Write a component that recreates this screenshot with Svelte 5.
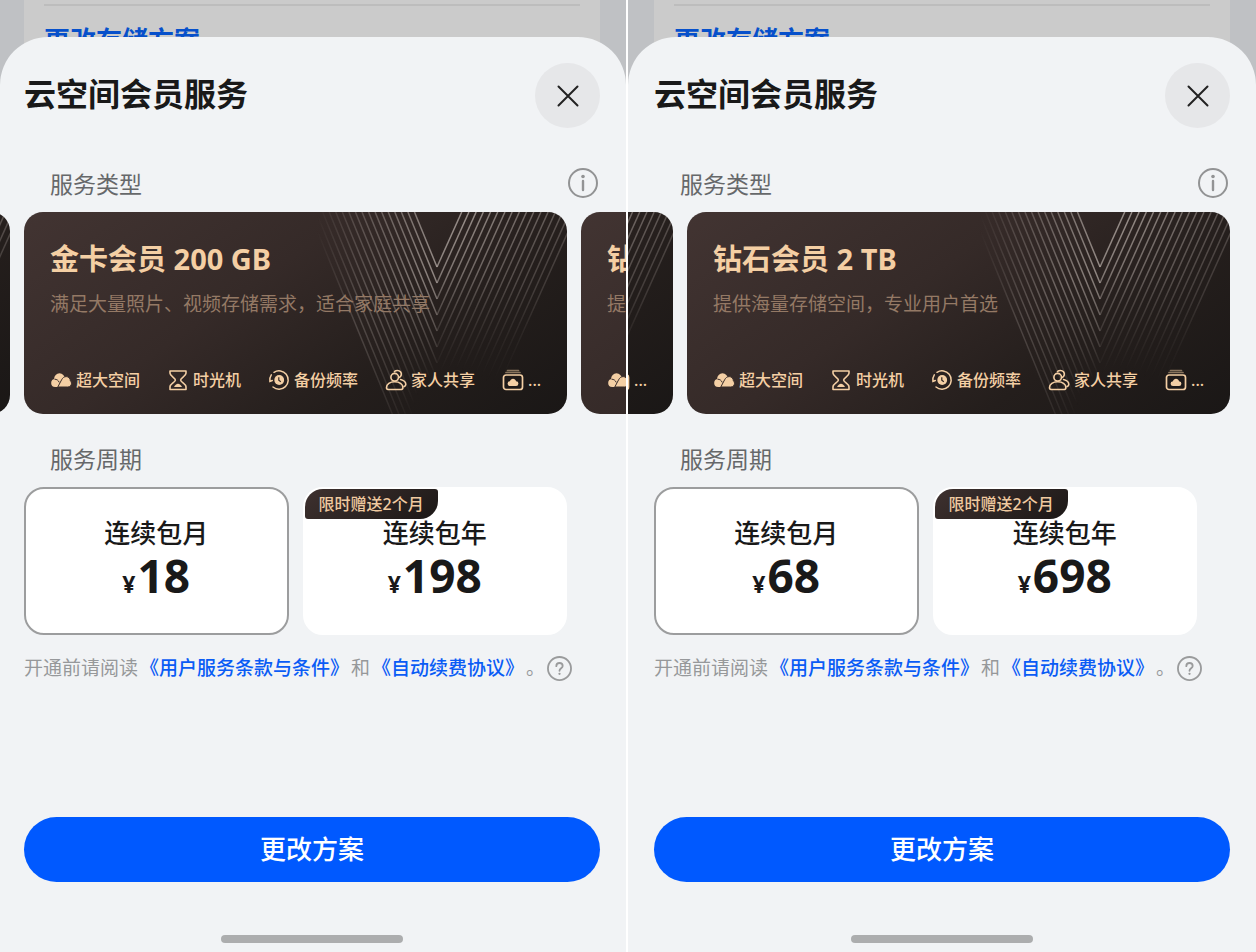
<script lang="ts">
	type Plan = {
		id: string;
		title: string;
		description: string;
	};

	type Period = {
		id: string;
		name: string;
		price: number;
		gift?: string;
	};

	type Pane = {
		id: string;
		align: 'start' | 'end';
		plans: Plan[];
		periods: Period[];
	};

	const basic: Plan = { id: 'basic', title: '', description: '' };
	const gold: Plan = {
		id: 'gold',
		title: '金卡会员 200 GB',
		description: '满足大量照片、视频存储需求，适合家庭共享'
	};
	const diamond: Plan = {
		id: 'diamond',
		title: '钻石会员 2 TB',
		description: '提供海量存储空间，专业用户首选'
	};

	const GIFT = '限时赠送2个月';

	const panes: Pane[] = [
		{
			id: 'left',
			align: 'start',
			plans: [basic, gold, diamond],
			periods: [
				{ id: 'month', name: '连续包月', price: 18 },
				{ id: 'year', name: '连续包年', price: 198, gift: GIFT }
			]
		},
		{
			id: 'right',
			align: 'end',
			plans: [gold, diamond],
			periods: [
				{ id: 'month', name: '连续包月', price: 68 },
				{ id: 'year', name: '连续包年', price: 698, gift: GIFT }
			]
		}
	];

	const benefits = [
		{ icon: 'cloud', label: '超大空间' },
		{ icon: 'hourglass', label: '时光机' },
		{ icon: 'backup', label: '备份频率' },
		{ icon: 'family', label: '家人共享' },
		{ icon: 'album', label: '...' }
	];

	// nested V lines, 16px apart
	const chevrons = Array.from({ length: 17 }, (_, i) => 55 + i * 16);

	let selected = $state<Record<string, string>>({ left: 'month', right: 'month' });
</script>

{#snippet benefitIcon(name: string)}
	<svg class="benefit-icon" viewBox="0 0 22 22" aria-hidden="true">
		{#if name === 'cloud'}
			<g fill="currentColor">
				<circle cx="5.200" cy="14" r="4" />
				<circle cx="9.500" cy="9.700" r="5.400" />
				<path d="M5.200 11h7v7h-7z" />
			</g>
			<path d="M7.800 18l3.800-7.200c1-2 2.600-3.200 4.600-3.200 2.500 0 4.100 1.900 4.200 4.200.8.6 1.100 1.500 1.100 2.500 0 2.200-1.500 3.700-3.700 3.700z" fill="currentColor" stroke="#382c2a" stroke-width="1" />
			<path d="M4.500 10.200c2.300 0 4 1.200 4.700 3.200" fill="none" stroke="#382c2a" stroke-width="1" />
		{:else if name === 'hourglass'}
			<g fill="none" stroke="currentColor" stroke-width="1.600" stroke-linejoin="round">
				<path d="M3 2h16v2.200c0 2.800-5.400 4.600-5.400 6.800s5.400 4 5.400 6.800V20.500H3v-2.700c0-2.800 5.400-4.600 5.400-6.800S3 7 3 4.200z" />
			</g>
			<path d="M7 18c.8-1.800 2.500-3.300 4-3.300s3.200 1.500 4 3.300z" fill="currentColor" />
		{:else if name === 'backup'}
			<g fill="none" stroke="currentColor" stroke-width="1.500" stroke-linecap="round">
				<path d="M6 3.300A9.200 9.200 0 1 1 5 18" />
				<path d="M3.300 5.900a9.200 9.200 0 0 0-1.400 6.600l2.400-1" />
			</g>
			<circle cx="11.200" cy="11" r="4.900" fill="currentColor" />
			<path d="M10.800 8.300v3l2 1.500" fill="none" stroke="#2c2321" stroke-width="1.200" />
		{:else if name === 'family'}
			<g fill="none" stroke="currentColor" stroke-width="1.600" stroke-linecap="round" stroke-linejoin="round">
				<circle cx="9.700" cy="8.200" r="3.800" />
				<path d="M1.500 18.600c0-3.500 3.500-5.900 8.200-5.900s8.200 2.400 8.200 5.900c0 1.200-.6 1.900-1.500 1.900H3c-.9 0-1.500-.7-1.500-1.900z" />
				<path d="M9.500 2.600c1.300-1.500 4.500-1.700 6 .2 1.500 2 .9 4.700-1.300 5.700" />
				<path d="M15.600 10.500c3 .7 5.200 2.800 5.200 5.100 0 1-.7 1.800-1.800 2" />
			</g>
		{:else}
			<g fill="none" stroke="currentColor" stroke-width="1.700" stroke-linecap="round">
				<path d="M5.500 1.500h11" opacity="0.500" />
				<path d="M4 3.500h14" opacity="0.500" />
				<rect x="1.500" y="6" width="19" height="14.500" rx="2.500" />
			</g>
			<path d="M8.100 17a2.400 2.400 0 0 1-.2-4.800c.5-1.500 1.700-2.400 3.100-2.400 1.500 0 2.700.9 3.100 2.400a2.400 2.400 0 0 1-.2 4.800z" fill="currentColor" />
		{/if}
	</svg>
{/snippet}

{#snippet planCard(plan: Plan, paneId: string)}
	{@const key = `${paneId}-${plan.id}`}
	<article class="plan">
		<svg class="plan-lines" viewBox="0 0 543 202" preserveAspectRatio="xMaxYMin slice" aria-hidden="true">
			<defs>
				<linearGradient id={`l-${key}`} gradientUnits="userSpaceOnUse" x1="293" y1="0" x2="413" y2="0">
					<stop offset="0" stop-color="#a49a96" stop-opacity="0" />
					<stop offset="0.350" stop-color="#a49a96" stop-opacity="0.340" />
					<stop offset="1" stop-color="#c4bab4" stop-opacity="0.680" />
				</linearGradient>
				<linearGradient id={`r-${key}`} gradientUnits="userSpaceOnUse" x1="413" y1="40" x2="520" y2="140">
					<stop offset="0" stop-color="#c4bab4" stop-opacity="0.680" />
					<stop offset="0.500" stop-color="#a49a96" stop-opacity="0.380" />
					<stop offset="1" stop-color="#a49a96" stop-opacity="0" />
				</linearGradient>
				<radialGradient id={`s-${key}`} gradientUnits="userSpaceOnUse" cx="432" cy="200" r="140">
					<stop offset="0.300" stop-color="#000" />
					<stop offset="1" stop-color="#000" stop-opacity="0" />
				</radialGradient>
				<mask id={`m-${key}`} maskUnits="userSpaceOnUse" x="0" y="0" width="543" height="202">
					<rect width="543" height="202" fill="#fff" />
					<rect width="543" height="202" fill={`url(#s-${key})`} />
				</mask>
			</defs>
			<g fill="none" stroke-width="1.500" mask={`url(#m-${key})`}>
				{#each chevrons as y}
					<path d={`M${413 - y * 0.41} 0L413 ${y}`} stroke={`url(#l-${key})`} />
					<path d={`M413 ${y}L${413 + y * 0.45} 0`} stroke={`url(#r-${key})`} />
				{/each}
			</g>
		</svg>
		{#if plan.title}
			<div class="plan-body">
				<h3>{plan.title}</h3>
				<p>{plan.description}</p>
				<ul>
					{#each benefits as benefit}
						<li>
							{@render benefitIcon(benefit.icon)}
							<span>{benefit.label}</span>
						</li>
					{/each}
				</ul>
			</div>
		{/if}
	</article>
{/snippet}

<main class="panes">
	{#each panes as pane}
		<section class={`pane ${pane.id}`}>
			<div class="backdrop">
				<div class="backdrop-card">
					<a href="#storage">更改存储方案</a>
				</div>
			</div>

			<div class="sheet">
				<header>
					<h1>云空间会员服务</h1>
					<button class="close" aria-label="关闭">
						<svg width="24" height="24" viewBox="0 0 24 24" aria-hidden="true">
							<path d="M2.500 2.500l19 19M21.500 2.500l-19 19" fill="none" stroke="#222" stroke-width="2" stroke-linecap="round" />
						</svg>
					</button>
				</header>

				<div class="row-title">
					<h2>服务类型</h2>
					<button class="icon-button" aria-label="服务类型说明">
						<svg width="30" height="30" viewBox="0 0 30 30" aria-hidden="true">
							<circle cx="15" cy="15" r="14" fill="none" stroke="#929394" stroke-width="2" />
							<circle cx="15" cy="8.500" r="1.800" fill="#929394" />
							<path d="M15 13v9" stroke="#929394" stroke-width="2.400" stroke-linecap="round" />
						</svg>
					</button>
				</div>

				<div class={`plans ${pane.align}`}>
					{#each pane.plans as plan}
						{@render planCard(plan, pane.id)}
					{/each}
				</div>

				<h2 class="period-title">服务周期</h2>
				<div class="periods">
					{#each pane.periods as period}
						<label class="period" class:active={selected[pane.id] === period.id}>
							<input type="radio" name={`period-${pane.id}`} value={period.id} bind:group={selected[pane.id]} />
							{#if period.gift}
								<span class="gift">{period.gift}</span>
							{/if}
							<span class="period-name">{period.name}</span>
							<span class="price"><small>¥</small>{period.price}</span>
						</label>
					{/each}
				</div>

				<div class="terms">
					<span>开通前请阅读</span>
					<a href="#terms">《用户服务条款与条件》</a>
					<span>和</span>
					<a href="#renewal">《自动续费协议》</a>
					<span>。</span>
					<button class="icon-button" aria-label="帮助">
						<svg width="25" height="25" viewBox="0 0 26 26" aria-hidden="true">
							<circle cx="13" cy="13" r="12" fill="none" stroke="#9a9b9c" stroke-width="1.900" />
							<path d="M9.700 10.600c0-2 1.400-3.300 3.300-3.300s3.300 1.200 3.300 3c0 2.300-3.300 2.500-3.300 5" fill="none" stroke="#9a9b9c" stroke-width="1.900" stroke-linecap="round" />
							<circle cx="13" cy="18.500" r="1.200" fill="#9a9b9c" />
						</svg>
					</button>
				</div>

				<button class="submit">更改方案</button>
				<div class="home-bar"></div>
			</div>
		</section>
	{/each}
</main>

<style>
	:global(body) {
		margin: 0;
		background: #fff;
	}

	.panes {
		display: grid;
		grid-template-columns: 313fr 314fr;
		gap: 2px;
		min-height: 100vh;
		font-family: 'Noto Sans', 'Noto Sans CJK SC', sans-serif;
		color: #191919;
	}

	.pane {
		--start: 26px;
		display: flex;
		flex-direction: column;
		min-width: 0;
		overflow: hidden;
		background: #bfc1c4;
	}

	.pane.left {
		--start: 24px;
	}

	h1,
	h2,
	h3,
	p,
	ul {
		margin: 0;
		padding: 0;
	}

	button {
		padding: 0;
		border: none;
		background: none;
		font-family: inherit;
		cursor: pointer;
	}

	a {
		color: #0a5cf5;
		text-decoration: none;
	}

	svg {
		display: block;
	}

	.backdrop {
		height: 85px;
		box-sizing: border-box;
		padding: 0 26px 0 var(--start);
	}

	.backdrop-card {
		height: 100%;
		box-sizing: border-box;
		padding: 4px 20px 0;
		background: #cbcbcb;
	}

	.backdrop-card a {
		display: block;
		padding-top: 16px;
		border-top: 2px solid #bdbdbd;
		color: #0650cb;
		font-size: 26px;
		font-weight: 700;
		line-height: 36px;
	}

	.sheet {
		flex: 1;
		display: flex;
		flex-direction: column;
		margin-top: -48px;
		padding: 26px 26px 9px var(--start);
		border-radius: 48px 48px 0 0;
		background: #f1f3f5;
		overflow: hidden;
	}

	header {
		display: flex;
		align-items: center;
		justify-content: space-between;
	}

	h1 {
		padding-bottom: 4px;
		font-size: 32px;
		line-height: 40px;
		font-weight: 700;
	}

	.close {
		display: grid;
		place-items: center;
		width: 65px;
		height: 65px;
		border-radius: 50%;
		background: #e6e7e9;
	}

	.row-title {
		display: flex;
		align-items: center;
		justify-content: space-between;
		margin: 40px 0 14px;
	}

	.row-title h2 {
		padding-top: 2px;
		line-height: 28px;
	}

	.row-title .icon-button {
		margin-right: 2px;
	}

	h2 {
		padding-left: 26px;
		color: #66686a;
		font-size: 23px;
		font-weight: 400;
		line-height: 30px;
	}

	.plans {
		display: flex;
		gap: 14px;
	}

	/* card width plus gap, so the second card lines up with the sheet */
	.plans.start {
		margin-left: calc(33px - 14px - 100%);
		width: 100%;
	}

	.plans.end {
		justify-content: flex-end;
	}

	.plan {
		flex: none;
		position: relative;
		width: calc(100% - 33px);
		height: 202px;
		border-radius: 19px;
		overflow: hidden;
		background: linear-gradient(145deg, #423432 0%, #352a28 40%, #241e1c 70%, #1a1716 100%);
		color: #f4cfa4;
	}

	.plan-lines {
		position: absolute;
		inset: 0;
		width: 100%;
		height: 100%;
	}

	.plan-body {
		position: relative;
		display: flex;
		flex-direction: column;
		height: 100%;
		box-sizing: border-box;
		padding: 28px 26px 22px;
	}

	.plan h3 {
		height: 40px;
		font-size: 29px;
		font-weight: 700;
		line-height: 38px;
	}

	.plan p {
		margin-top: 9px;
		color: #947965;
		font-size: 19px;
		line-height: 30px;
		white-space: nowrap;
	}

	.plan ul {
		display: flex;
		gap: 27px;
		margin-top: auto;
		list-style: none;
	}

	.plan li {
		display: flex;
		align-items: center;
		gap: 4px;
		font-size: 16px;
		font-weight: 500;
		line-height: 24px;
		white-space: nowrap;
	}

	.benefit-icon {
		width: 22px;
		height: 22px;
	}

	.period-title {
		margin: 30px 0 13px;
	}

	.periods {
		display: grid;
		grid-template-columns: 1fr 1fr;
		gap: 14px;
		margin-right: 33px;
	}

	.period {
		position: relative;
		display: flex;
		flex-direction: column;
		align-items: center;
		height: 148px;
		box-sizing: border-box;
		padding-top: 26px;
		border: 2px solid #fff;
		border-radius: 20px;
		background: #fff;
		cursor: pointer;
	}

	.period.active {
		border-color: #9c9d9e;
	}

	.period input {
		position: absolute;
		opacity: 0;
	}

	.gift {
		position: absolute;
		top: 0;
		left: 0;
		padding: 0 14px;
		border-radius: 18px 3px 18px 3px;
		background: linear-gradient(145deg, #3e312f, #1c1817);
		color: #f0caa0;
		font-size: 16px;
		font-weight: 500;
		line-height: 30px;
	}

	.period-name {
		font-size: 26px;
		font-weight: 500;
		line-height: 36px;
	}

	.price {
		font-size: 46px;
		font-weight: 700;
		line-height: 48px;
	}

	.price small {
		margin-right: 2px;
		font-size: 23px;
	}

	.terms {
		display: flex;
		align-items: center;
		gap: 2px;
		margin-top: 18px;
		color: #96989a;
		font-size: 19px;
		line-height: 30px;
		white-space: nowrap;
	}

	.terms a {
		font-weight: 500;
	}

	.submit {
		height: 65px;
		margin-top: auto;
		padding-bottom: 3px;
		border-radius: 33px;
		background: #0059ff;
		color: #fff;
		font-size: 26px;
		font-weight: 500;
	}

	.home-bar {
		align-self: center;
		width: 182px;
		height: 8px;
		margin-top: 53px;
		border-radius: 4px;
		background: #acadae;
	}
</style>
